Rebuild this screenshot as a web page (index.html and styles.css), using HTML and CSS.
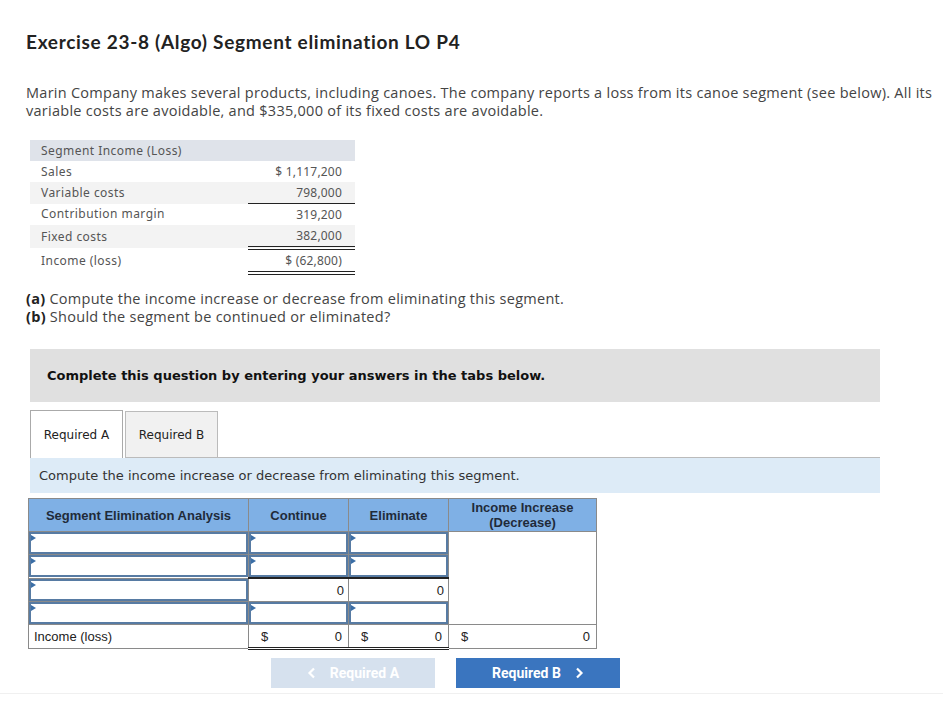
FILE: index.html
```html
<!DOCTYPE html>
<html>
<head>
<meta charset="utf-8">
<link rel="stylesheet" href="styles.css">
</head>
<body>
<div class="page">
  <h1 class="title">Exercise 23-8 (Algo) Segment elimination LO P4</h1>
  <p class="intro">Marin Company makes several products, including canoes. The company reports a loss from its canoe segment (see below). All its<br>variable costs are avoidable, and $335,000 of its fixed costs are avoidable.</p>

  <table class="seg">
    <tr class="seg-head"><td class="lbl">Segment Income (Loss)</td><td class="val"></td></tr>
    <tr><td class="lbl">Sales</td><td class="val">$ 1,117,200</td></tr>
    <tr class="shade"><td class="lbl">Variable costs</td><td class="val under">798,000</td></tr>
    <tr><td class="lbl">Contribution margin</td><td class="val">319,200</td></tr>
    <tr class="shade"><td class="lbl">Fixed costs</td><td class="val dbl">382,000</td></tr>
    <tr class="last"><td class="lbl">Income (loss)</td><td class="val dbl">$ (62,800)</td></tr>
  </table>

  <div class="questions">
    <div><b>(a)</b> Compute the income increase or decrease from eliminating this segment.</div>
    <div><b>(b)</b> Should the segment be continued or eliminated?</div>
  </div>

  <div class="notice">Complete this question by entering your answers in the tabs below.</div>

  <div class="tabs">
    <div class="tab active">Required A</div>
    <div class="tab">Required B</div>
    <div class="tab-rest"></div>
  </div>
  <div class="instr">Compute the income increase or decrease from eliminating this segment.</div>

  <table class="ans">
    <colgroup><col class="c1"><col class="c2"><col class="c3"><col class="c4"></colgroup>
    <thead>
      <tr><th>Segment Elimination Analysis</th><th>Continue</th><th>Eliminate</th><th>Income Increase<br>(Decrease)</th></tr>
    </thead>
    <tbody>
      <tr class="r">
        <td><div class="field"></div></td><td><div class="field"></div></td><td><div class="field"></div></td>
        <td rowspan="4" class="blank"></td>
      </tr>
      <tr class="r">
        <td><div class="field"></div></td><td><div class="field"></div></td><td><div class="field"></div></td>
      </tr>
      <tr class="r">
        <td><div class="field"></div></td><td class="calc">0</td><td class="calc">0</td>
      </tr>
      <tr class="r">
        <td><div class="field"></div></td><td><div class="field"></div></td><td><div class="field"></div></td>
      </tr>
      <tr class="r total">
        <td class="tl">Income (loss)</td>
        <td class="money dbl2"><span>$</span><span>0</span></td>
        <td class="money dbl2"><span>$</span><span>0</span></td>
        <td class="money"><span>$</span><span>0</span></td>
      </tr>
    </tbody>
  </table>

  <div class="nav">
    <div class="btn disabled">
      <svg width="10" height="12" viewBox="0 0 10 12"><path d="M7 1.5 L2.5 6 L7 10.5" fill="none" stroke="#fff" stroke-width="2.2"/></svg>
      <span>Required A</span>
    </div>
    <div class="btn primary">
      <span>Required B</span>
      <svg width="10" height="12" viewBox="0 0 10 12"><path d="M3 1.5 L7.5 6 L3 10.5" fill="none" stroke="#fff" stroke-width="2.2"/></svg>
    </div>
  </div>
  <div class="footer"></div>
</div>
</body>
</html>
```

FILE: styles.css
```css
html, body {
  margin: 0;
  padding: 0;
  background: #fff;
}
.page {
  padding: 30px 0 0 26px;
  font-family: "Open Sans", Lato, sans-serif;
  color: #333;
}
.title {
  margin: 0;
  font-family: Lato, "Open Sans", sans-serif;
  font-size: 19px;
  line-height: 24px;
  font-weight: 700;
  color: #222;
  letter-spacing: 0.7px;
}
.intro {
  margin: 30px 0 0 0;
  font-size: 14.5px;
  letter-spacing: 0.27px;
  line-height: 18px;
  color: #444;
  white-space: nowrap;
}
.seg {
  margin: 20px 0 0 4px;
  border-collapse: collapse;
  font-family: "Noto Sans", sans-serif;
  font-size: 12px;
  color: #555;
  width: 325px;
  letter-spacing: 0.45px;
}
.seg td {
  padding: 0;
  height: 21px;
  line-height: 20px;
  vertical-align: middle;
}
.seg .lbl {
  width: 218px;
  padding-left: 11px;
  box-sizing: border-box;
}
.seg .val {
  text-align: right;
  padding-right: 13px;
  letter-spacing: 0.2px;
}
.seg-head td {
  background: #dfe3ea;
}
.seg .shade td {
  background: #f3f3f3;
}
.seg .under {
  border-bottom: 1px solid #222;
}
.seg .dbl {
  border-bottom: 4px double #222;
}
.seg .last td {
  height: 21px;
}
.questions {
  margin-top: 15px;
  font-size: 14.5px;
  letter-spacing: 0.27px;
  line-height: 18px;
  color: #444;
}
.questions b {
  color: #222;
}
.notice {
  margin: 23px 0 0 4px;
  width: 850px;
  height: 53px;
  box-sizing: border-box;
  background: #e0e0e0;
  padding-left: 17px;
  display: flex;
  align-items: center;
  font-family: "DejaVu Sans", Verdana, sans-serif;
  font-weight: 700;
  font-size: 13px;
  color: #111;
}
.tabs {
  margin: 8px 0 0 4px;
  display: flex;
  width: 850px;
  align-items: flex-end;
  font-family: "DejaVu Sans", Verdana, sans-serif;
  font-size: 12px;
  color: #222;
}
.tab {
  width: 93px;
  height: 47px;
  box-sizing: border-box;
  border: 1px solid #bbb;
  background: #f1f1f1;
  display: flex;
  align-items: center;
  justify-content: center;
  margin-right: 2px;
}
.tab.active {
  background: #fff;
  height: 48px;
  border-bottom: none;
  border-color: #aaa;
}
.tab-rest {
  flex: 1;
  border-bottom: 1px solid #bbb;
  margin-left: -2px;
}
.instr {
  margin-left: 4px;
  width: 850px;
  height: 35px;
  box-sizing: border-box;
  background: #ddebf7;
  padding-left: 9px;
  display: flex;
  align-items: center;
  font-family: "DejaVu Sans", Verdana, sans-serif;
  font-size: 13px;
  color: #333;
}
.ans {
  margin: 5px 0 0 2px;
  border-collapse: collapse;
  table-layout: fixed;
  width: 568px;
  font-family: "Liberation Sans", Arial, sans-serif;
  font-size: 13px;
  color: #222;
}
.ans col.c1 { width: 220px; }
.ans col.c2 { width: 100px; }
.ans col.c3 { width: 100px; }
.ans col.c4 { width: 148px; }
.ans th {
  height: 32px;
  padding: 0;
  background: #7fb0e5;
  border: 1px solid #8a8a8a;
  font-weight: 700;
  line-height: 15px;
  color: #1f2b3a;
}
.ans td {
  padding: 0;
  height: 22px;
  border: 1px solid #8a8a8a;
}
.field {
  position: relative;
  height: 22px;
  box-sizing: border-box;
  border: 2px solid #577ba3;
  background: #fff;
}
.field::before {
  content: "";
  position: absolute;
  left: 0;
  top: 1px;
  border-left: 5px solid #3b6ea6;
  border-top: 3px solid transparent;
  border-bottom: 3px solid transparent;
}
.ans td.calc {
  text-align: right;
  padding-right: 4px;
  border-top: 2px solid #222;
}
.ans td.blank {
  background: #fff;
}
.ans .total td {
  height: 22px;
}
.ans td.tl {
  padding-left: 5px;
}
.ans td.money {
  padding: 0 6px 0 12px;
}
.ans td.money span:first-child {
  float: left;
}
.ans td.money span:last-child {
  float: right;
}
.ans td.dbl2 {
  border-bottom: 3px double #222;
}
.nav {
  margin: 8px 0 0 245px;
  display: flex;
  gap: 21px;
}
.btn {
  width: 164px;
  height: 30px;
  display: flex;
  align-items: center;
  justify-content: center;
  gap: 13px;
  font-family: Roboto, "Liberation Sans", sans-serif;
  font-weight: 700;
  font-size: 14px;
  color: #fff;
}
.btn.disabled {
  background: #d6e1ee;
}
.btn.primary {
  background: #3a75bf;
}
.footer {
  margin: 5px 0 0 -26px;
  height: 20px;
  border-top: 1px solid #f0f0f0;
}
```
